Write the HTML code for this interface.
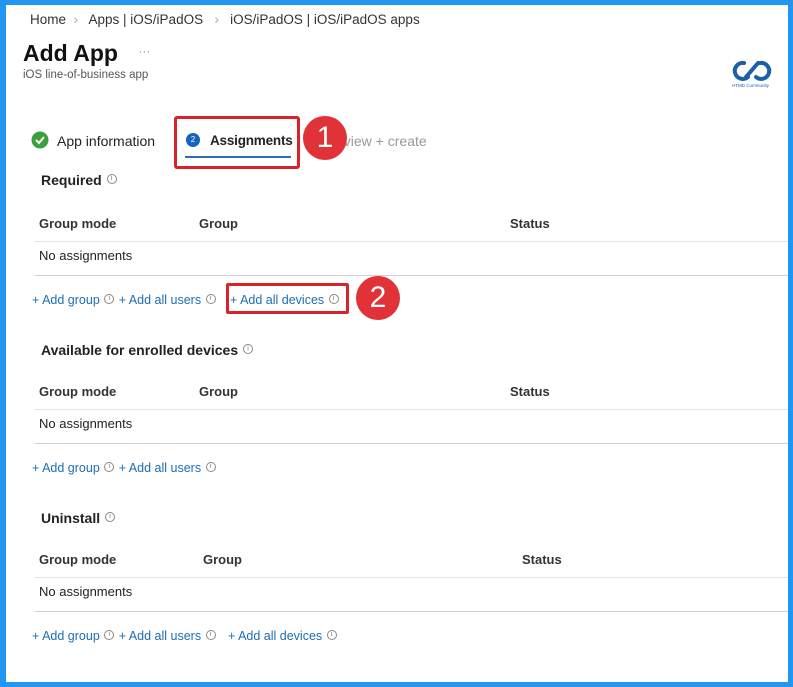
<!DOCTYPE html>
<html><head><meta charset="utf-8"><style>
*{margin:0;padding:0;box-sizing:border-box}
body{width:793px;height:687px;background:#2196f3;font-family:"Liberation Sans",sans-serif;position:relative;overflow:hidden}
#p{position:absolute;left:6px;top:5px;width:782px;height:677px;background:#fff}
.a{position:absolute;white-space:nowrap}
.t{font-size:13px;color:#222}
.h{font-size:13px;color:#333;font-weight:bold}
.s{font-size:14px;color:#222;font-weight:bold}
.l{font-size:12.5px;color:#1a6fb5}
.line{position:absolute;left:29px;right:0;height:1px;background:#e3e3e3}
.line2{position:absolute;left:29px;right:0;height:1px;background:#cfcfcf}
.i{display:inline-block;width:10px;height:10px;border:1px solid #888;border-radius:50%;font-size:7px;line-height:8px;text-align:center;color:#777;vertical-align:middle;position:relative;top:-2px;font-weight:normal;margin:0 1px}
.red{position:absolute;width:44px;height:44px;border-radius:50%;background:#e03237;color:#fff;font-size:30px;text-align:center;line-height:44px}
</style></head><body><div id="p">
<div class="a t" style="left:24px;top:7px;font-size:13.5px;color:#333">Home &nbsp;<span style="color:#aaa">›</span>&nbsp;&nbsp; Apps | iOS/iPadOS &nbsp;&nbsp;<span style="color:#aaa">›</span>&nbsp;&nbsp; iOS/iPadOS | iOS/iPadOS apps</div>
<div class="a" style="left:17px;top:35px;font-size:23px;font-weight:bold;color:#111">Add App <span style="font-size:12px;color:#999;font-weight:normal;margin-left:14px;vertical-align:6px">···</span></div>
<div class="a" style="left:17px;top:64px;font-size:11.5px;color:#555">iOS line-of-business app</div>
<svg class="a" style="left:724px;top:52px" width="44" height="32" viewBox="0 0 44 32"><path d="M14 6a8 8 0 1 0 4 14M30 6a8 8 0 1 1-4 14M16 20L28 6" stroke="#1b5fa8" stroke-width="4" fill="none" stroke-linecap="round"/><text x="2" y="30" font-size="4.5" fill="#1b5fa8" font-family="Liberation Sans">HTMD Community</text></svg>
<svg class="a" style="left:25px;top:126px" width="18" height="18"><circle cx="9" cy="9" r="8.5" fill="#3ca03c"/><path d="M5 9l3 3 5-6" stroke="#fff" stroke-width="2" fill="none"/></svg>
<div class="a t" style="left:51px;top:128px;font-size:14px">App information</div>
<div class="a" style="left:168px;top:111px;width:126px;height:53px;border:3px solid #d8232a;border-radius:3px"></div>
<div class="a" style="left:180px;top:128px;width:14px;height:14px;border-radius:50%;background:#1565c0;color:#fff;font-size:8px;text-align:center;line-height:14px">2</div>
<div class="a" style="left:204px;top:128px;font-size:13.5px;font-weight:bold;color:#222;letter-spacing:-0.2px">Assignments</div>
<div class="a" style="left:179px;top:151px;width:106px;height:2px;background:#2d6cb5"></div>
<div class="a" style="left:330px;top:128px;font-size:14px;color:#999">eview + create</div>
<div class="red" style="left:297px;top:111px">1</div>

<div class="a s" style="left:35px;top:167px">Required <span class="i">i</span></div>
<div class="a h" style="left:33px;top:211px">Group mode</div><div class="a h" style="left:193px;top:211px">Group</div><div class="a h" style="left:504px;top:211px">Status</div>
<div class="line" style="top:236px"></div>
<div class="a t" style="left:33px;top:243px">No assignments</div>
<div class="line2" style="top:270px"></div>
<div class="a l" style="left:26px;top:288px">+ Add group <span class="i">i</span> + Add all users <span class="i">i</span></div>
<div class="a" style="left:220px;top:278px;width:123px;height:31px;border:3px solid #d8232a;border-radius:2px"></div>
<div class="a l" style="left:224px;top:288px">+ Add all devices <span class="i">i</span></div>
<div class="red" style="left:350px;top:271px">2</div>

<div class="a s" style="left:35px;top:337px">Available for enrolled devices <span class="i">i</span></div>
<div class="a h" style="left:33px;top:379px">Group mode</div><div class="a h" style="left:193px;top:379px">Group</div><div class="a h" style="left:504px;top:379px">Status</div>
<div class="line" style="top:404px"></div>
<div class="a t" style="left:33px;top:411px">No assignments</div>
<div class="line2" style="top:438px"></div>
<div class="a l" style="left:26px;top:456px">+ Add group <span class="i">i</span> + Add all users <span class="i">i</span></div>

<div class="a s" style="left:35px;top:505px">Uninstall <span class="i">i</span></div>
<div class="a h" style="left:33px;top:547px">Group mode</div><div class="a h" style="left:197px;top:547px">Group</div><div class="a h" style="left:516px;top:547px">Status</div>
<div class="line" style="top:572px"></div>
<div class="a t" style="left:33px;top:579px">No assignments</div>
<div class="line2" style="top:606px"></div>
<div class="a l" style="left:26px;top:624px">+ Add group <span class="i">i</span> + Add all users <span class="i">i</span></div>
<div class="a l" style="left:222px;top:624px">+ Add all devices <span class="i">i</span></div>
</div></body></html>
